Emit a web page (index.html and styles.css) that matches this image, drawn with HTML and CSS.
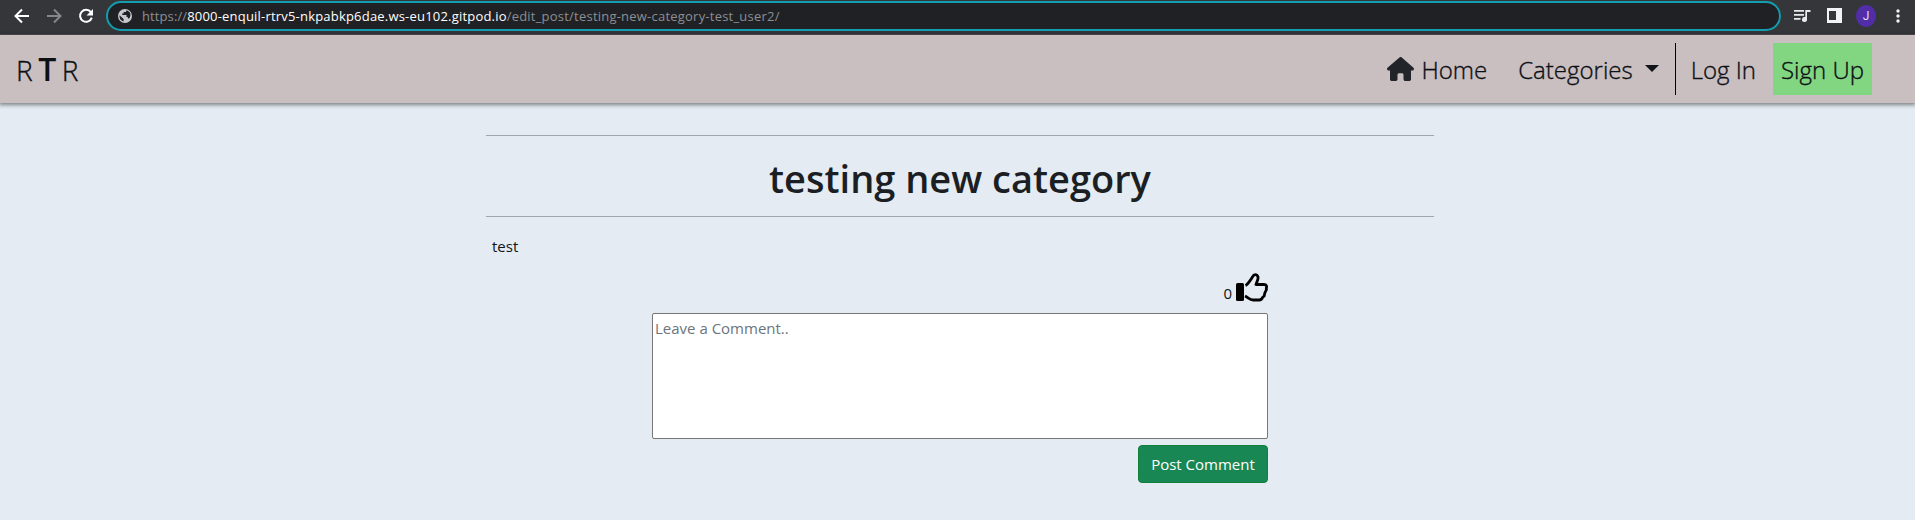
FILE: index.html
```html
<!DOCTYPE html>
<html lang="en">
<head>
<meta charset="utf-8">
<title>testing new category</title>
<link rel="stylesheet" href="styles.css">
</head>
<body>
<div class="browser">
  <svg class="ico back" width="16" height="16" viewBox="0 0 16 16" fill="none" stroke="#fff" stroke-width="2"><path d="M15 8H2M8 1.500 1.500 8 8 14.500"/></svg>
  <svg class="ico fwd" width="16" height="16" viewBox="0 0 16 16" fill="none" stroke="#85868a" stroke-width="2"><path d="M1 8h13M8 1.500 14.500 8 8 14.500"/></svg>
  <svg class="ico reload" width="16" height="16" viewBox="0 0 16 16"><path d="M12.900 4.200A6 6 0 1 0 13.800 9.600" fill="none" stroke="#fff" stroke-width="2"/><path d="M15 1v6.500H8.500z" fill="#fff"/></svg>
  <div class="omnibox">
    <svg class="globe" width="14" height="14" viewBox="0 0 14 14"><circle cx="7" cy="7" r="7" fill="#c6c8ca"/><path d="M1.500 6.200 5.600 10v2.400A5.700 5.700 0 0 1 1.500 6.200zM8.300 1.500c0 1-.4 1.600-1.300 1.600H5.600v1.500H4.200V6h4.300v2h1.400v1.500h1.200c1.600-1.500 1.900-4.500.4-6.400C10.600 2 9.400 1.500 8.300 1.500z" fill="#202124"/></svg>
    <div class="url"><span class="scheme">https://</span><span class="host">8000-enquil-rtrv5-nkpabkp6dae.ws-eu102.gitpod.io</span><span class="path">/edit_post/testing-new-category-test_user2/</span></div>
  </div>
  <svg class="ico media" width="17" height="14" viewBox="0 0 17 14" fill="#e8eaed"><path d="M0 1h10v1.700H0zM0 5h10v1.700H0zM0 9h6.500v1.700H0zM11.300 1H16.500v2H13v7.300a2.500 2.500 0 1 1-1.700-2.200z"/></svg>
  <svg class="ico panel" width="15" height="15" viewBox="0 0 15 15"><path d="M0 0h15v15H0zM2 3v9h7V3z" fill="#f1f3f4" fill-rule="evenodd"/></svg>
  <span class="avatar">J</span>
  <svg class="ico dots" width="4" height="14" viewBox="0 0 4 14" fill="#f1f3f4"><circle cx="2" cy="2" r="1.700"/><circle cx="2" cy="7" r="1.700"/><circle cx="2" cy="12" r="1.700"/></svg>
</div>
<nav class="navbar">
  <a class="brand"><span>R</span><b>T</b><span>R</span></a>
  <div class="links">
    <a class="home"><svg width="27" height="24" viewBox="0 0 576 512" fill="#212529"><path d="M575.800 255.500c0 18-15 32.100-32 32.100h-32l.7 160.200c0 2.700-.2 5.400-.5 8.100V472c0 22.100-17.900 40-40 40H392c-22.100 0-40-17.900-40-40V376c0-17.700-14.300-32-32-32h-64c-17.700 0-32 14.300-32 32v96c0 22.100-17.900 40-40 40H104c-22.100 0-40-17.900-40-40V287.600H32c-18 0-32-14-32-32.100 0-9 3-17 10-24L266.400 8c7-7 15-8 22-8s15 2 21 7l255.400 224.500c8 7 12 15 11 24z"/></svg><span>Home</span></a>
    <a class="cats"><span>Categories</span><i class="caret"></i></a>
    <a class="login">Log In</a>
    <a class="signup">Sign Up</a>
  </div>
</nav>
<main class="post">
  <h1 class="title">testing new category</h1>
  <p class="body">test</p>
  <section class="comments">
    <div class="likes"><span>0</span><svg width="33" height="29" viewBox="0 0 33 29"><rect x="1" y="10" width="8" height="18" rx="1.500"/><path d="M10.500 12.500C13 11.500 14.500 8.500 16.500 5.500 18 3 18.500 1.500 20.500 1.700c2.500.3 3 2.800 2.200 5L21 11.500h8c2.500 0 3 2 2.300 3.800l.2 1.200-1.700 3.500-.6 3-1.500 1.300c-.7 2-1.500 2.700-3.500 2.700h-6c-3.500 0-5-2.500-8.200-4" fill="none" stroke="#000" stroke-width="2.800" stroke-linejoin="round"/></svg></div>
    <textarea class="field" placeholder="Leave a Comment.."></textarea>
    <button class="submit">Post Comment</button>
  </section>
</main>
</body>
</html>
```
FILE: styles.css
```css
* { box-sizing: border-box; }
body {
  margin: 0;
  height: 520px;
  overflow: hidden;
  background: #e4ebf2;
  color: #212529;
  font: 16px/24px "Open Sans", "Noto Sans", sans-serif;
}
svg { display: block; flex: none; }
.browser {
  display: flex;
  align-items: center;
  height: 35px;
  padding: 0 15px 3px 14px;
  background: #35363a;
  border-bottom: 1px solid #545458;
}
.fwd { margin-left: 16px; }
.reload { margin: 0 12px 0 16px; }
.omnibox {
  display: flex;
  align-items: center;
  flex: none;
  width: 1675px;
  height: 30px;
  padding-left: 10px;
  border: 2px solid #129eaf;
  border-radius: 15px;
  background: #202124;
}
.url {
  display: flex;
  margin-left: 10px;
  font-size: 13px;
  line-height: 20px;
  color: #8b8f94;
  white-space: nowrap;
}
.scheme { letter-spacing: .1px; }
.host { color: #fff; letter-spacing: .2px; }
.path { letter-spacing: .22px; }
.media { margin-left: 13px; }
.panel { margin-left: 16px; }
.avatar {
  width: 22px;
  height: 22px;
  margin-left: 14px;
  border-radius: 50%;
  background: #512da8;
  color: #e6def5;
  font: 12px/22px Roboto, sans-serif;
  text-align: center;
}
.dots { margin-left: 20px; }
.navbar {
  display: flex;
  justify-content: space-between;
  height: 68px;
  padding: 8px 43px 8px 16px;
  background: #cabfc0;
  box-shadow: 0 1px 4px 1px rgba(0, 0, 0, .45);
  font-size: 24px;
  font-weight: 300;
  line-height: 54px;
  color: #0c1014;
  -webkit-text-stroke: .35px #0c1014;
}
.brand {
  display: flex;
  align-items: baseline;
  gap: 5.5px;
  font-size: 28px;
  line-height: 51px;
}
.brand b { font-size: 32px; font-weight: 600; line-height: 51px; -webkit-text-stroke: 0; }
.links { display: flex; height: 52px; }
.home { display: flex; align-items: center; gap: 7px; margin-right: 31px; }
.home span, .cats span { margin-top: 2px; }
.cats { display: flex; align-items: center; padding-right: 16px; border-right: 1px solid #000; }
.caret {
  margin: 0 0 1px 12px;
  border: 7px solid transparent;
  border-top-color: #111418;
  border-bottom: 0;
}
.login { margin: 0 17px 0 15px; }
.signup { width: 99px; text-align: center; background: #82d682; }
.post { width: 948px; margin: 32px 0 0 486px; }
.title {
  height: 82px;
  margin: 0;
  border: solid #a1a5ac;
  border-width: 1px 0;
  font-size: 38px;
  font-weight: 600;
  line-height: 84px;
  text-align: center;
  color: #1b1f23;
}
.body { margin: 17px 0 0 6px; font-size: 15px; line-height: 24px; color: #111418; }
.comments { width: 616px; margin: 14px 0 0 166px; }
.likes { display: flex; justify-content: flex-end; gap: 3px; height: 41px; font-size: 15px; line-height: 42px; color: #111418; }
.likes svg { margin-top: 1px; }
.field {
  display: block;
  width: 616px;
  height: 126px;
  margin: 0;
  padding: 2px;
  border: 1px solid #767676;
  border-radius: 2px;
  resize: none;
  background: #fff;
  font: 15px/24px "Open Sans", sans-serif;
}
.field::placeholder { color: #6c757d; }
.submit {
  display: block;
  width: 130px;
  height: 38px;
  margin: 6px 0 0 auto;
  padding: 0;
  border: 1px solid #0f7f3a;
  border-radius: 4px;
  background: #198754;
  color: #fff;
  font: 15px/24px "Open Sans", sans-serif;
}
```
